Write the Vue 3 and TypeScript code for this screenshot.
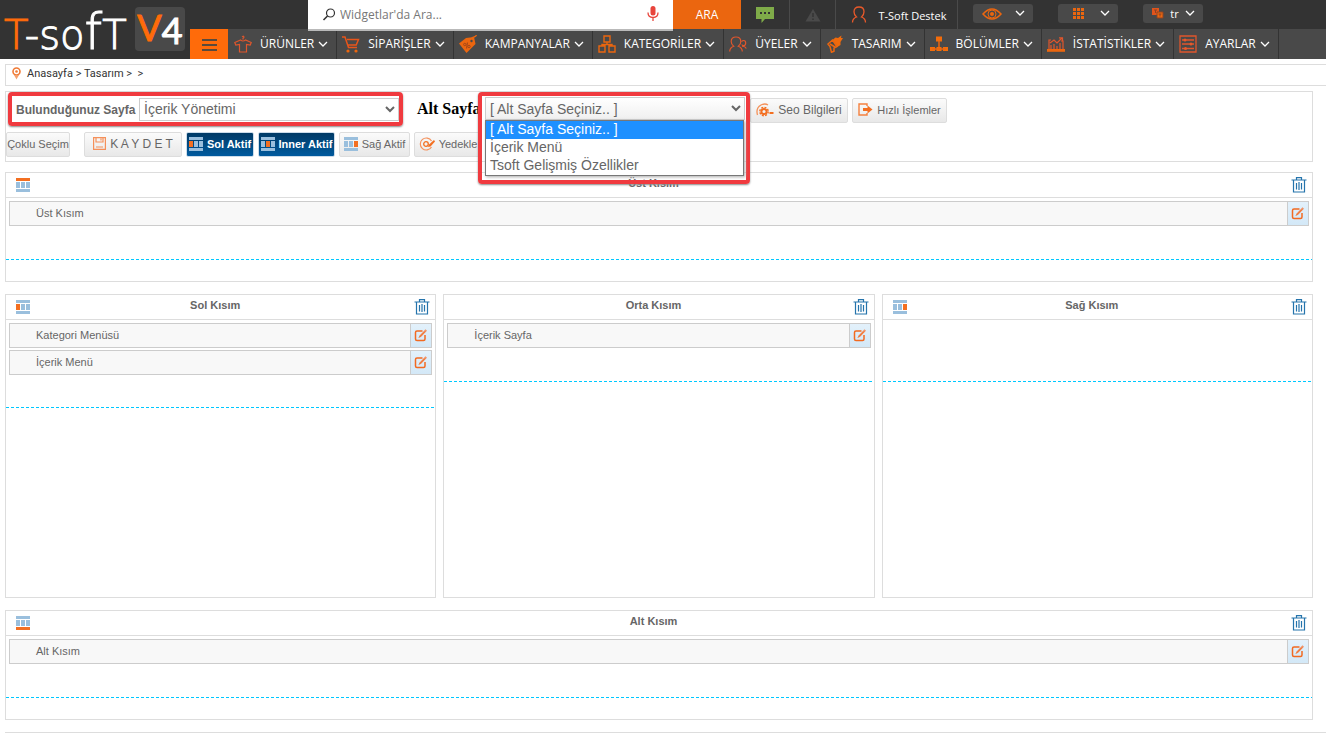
<script setup lang="ts">
import { ref } from 'vue'

type Slot = 'top' | 'left' | 'center' | 'right' | 'bottom'
interface Panel { id: Slot; title: string; items: string[]; icon: boolean }

const menu: { label: string; icon: string }[] = [
  { label: 'ÜRÜNLER', icon: 'shirt' },
  { label: 'SİPARİŞLER', icon: 'cart' },
  { label: 'KAMPANYALAR', icon: 'tag' },
  { label: 'KATEGORİLER', icon: 'boxes' },
  { label: 'ÜYELER', icon: 'users' },
  { label: 'TASARIM', icon: 'brush' },
  { label: 'BÖLÜMLER', icon: 'tree' },
  { label: 'İSTATİSTİKLER', icon: 'chart' },
  { label: 'AYARLAR', icon: 'sliders' },
]

const rows: Panel[][] = [
  [{ id: 'top', title: 'Üst Kısım', items: ['Üst Kısım'], icon: true }],
  [
    { id: 'left', title: 'Sol Kısım', items: ['Kategori Menüsü', 'İçerik Menü'], icon: true },
    { id: 'center', title: 'Orta Kısım', items: ['İçerik Sayfa'], icon: false },
    { id: 'right', title: 'Sağ Kısım', items: [], icon: true },
  ],
  [{ id: 'bottom', title: 'Alt Kısım', items: ['Alt Kısım'], icon: true }],
]

const subPages = ['[ Alt Sayfa Seçiniz.. ]', 'İçerik Menü', 'Tsoft Gelişmiş Özellikler']
const page = ref('İçerik Yönetimi')
const subPage = ref(subPages[0])
const query = ref('')
</script>

<template>
  <svg class="defs" aria-hidden="true">
    <symbol id="chev" viewBox="0 0 10 7"><path d="M1 1l4 4 4-4" fill="none" stroke="currentColor" stroke-width="1.3" /></symbol>
    <symbol id="shirt" viewBox="0 0 18 18"><path d="M9 4.500V3.200q1.300-.5.8-1.500-.8-1-1.700.1M6.500 5L.8 7.500l1 2.500 3.700-.5V17h7V9.500l3.700.5 1-2.500L11.500 5q-2.500 2-5 0z" fill="none" stroke="#e0562c" stroke-width="1.200" /></symbol>
    <symbol id="cart" viewBox="0 0 18 18"><path d="M0 2h3l3.500 10.500H15M5 4.500h11.500l-2.300 5.500H6.300" fill="none" stroke="#e8551a" stroke-width="1.500" /><circle cx="6" cy="16" r="1.600" fill="#eb660f" /><circle cx="14" cy="16" r="1.600" fill="#eb660f" /></symbol>
    <symbol id="tag" viewBox="0 0 18 18"><path d="M0 8.500L7 3l8-1 1.500 7L7.500 18z" fill="#eb660f" /><path d="M12.500 5.500q0-3 2.500-3.500 2-.5 2.500-2" fill="none" stroke="#eb660f" stroke-width="1.300" /><circle cx="12.500" cy="6" r="1.200" fill="#494949" /><path d="M8.500 7.500l-1 6" stroke="#a34719" stroke-width="1.100" /><circle cx="5.800" cy="9.500" r="1.200" fill="none" stroke="#a34719" /><circle cx="10" cy="11.500" r="1.200" fill="none" stroke="#a34719" /></symbol>
    <symbol id="boxes" viewBox="0 0 18 18"><path d="M6 1h6v6H6zM1 11h6v6H1zM11 11h6v6h-6zM9 7v2.500M4 11V9.500h10V11" fill="none" stroke="#eb660f" stroke-width="1.400" /></symbol>
    <symbol id="users" viewBox="0 0 18 18"><path d="M.7 16.500q0-3.500 4-5.200Q2.200 9.500 2.200 6.500 2.200 2 7 2t4.800 4.500q0 3-2.500 4.800 4 1.700 4 5.200M13 11.300q3.200-.3 4.300 2.200M12.700 6.500q.7-1 2-1 2 0 2 2.500t-2 2.700q-1.200 0-2-1.200" fill="none" stroke="#e0562c" stroke-width="1.200" /></symbol>
    <symbol id="brush" viewBox="0 0 18 18"><path d="M6.500 5l3-2.500L12 3l3.500-2.500L15 3h2l-2.500 4v3l-4 2.500z" fill="#f06a0c" /><path d="M6.500 5L2 9l2 2.500 1.500 5.800 2.500-1L8 13l3-1.500zM4 9l5 3" fill="none" stroke="#eb660f" stroke-width="1.500" /></symbol>
    <symbol id="tree" viewBox="0 0 18 18"><path d="M6 1.500h6v5H6zM0 12h5v4H0zM6.500 12h5v4h-5zM13 12h5v4h-5z" fill="#f36c0a" /><path d="M9 6v6M2 14h14" stroke="#eb660f" stroke-width="1.500" /></symbol>
    <symbol id="chart" viewBox="0 0 18 18"><path d="M2 14V5h2M14 6h2v8M4 14v-4M7 14V9M10 14v-3M13 14V8M3 8l4-3 3 3 5-5M12 2.800h3.500V6" fill="none" stroke="#e0562c" stroke-width="1.200" /><path d="M0 14h18v2.800H0z" fill="#eb660f" /></symbol>
    <symbol id="sliders" viewBox="0 0 18 18"><path d="M1 1h16v16H1zM3 5h12M3 9h12M3 13.500h12" fill="none" stroke="#e0562c" stroke-width="1.300" /><circle cx="6" cy="5" r="1.500" fill="#e8592a" /><circle cx="12" cy="9" r="1.500" fill="#e8592a" /><circle cx="6.500" cy="13.500" r="1.500" fill="#e8592a" /></symbol>
    <symbol id="edit" viewBox="0 0 14 14"><path d="M8.500 3H3Q1.500 3 1.500 4.500v6.500Q1.500 12.500 3 12.500h6.500q1.500 0 1.500-1.500V7" fill="none" stroke="#f26a21" stroke-width="1.500" /><path d="M4.800 9.800L5.500 7.500 11.500 1.300l1.500 1.500L7 9z" fill="#f0956a" /><path d="M5 9.500l6-6" stroke="#f26a21" /></symbol>
    <symbol id="trash" viewBox="0 0 16 16"><path d="M.5 3h15M5.500 3V.7h5V3M2.500 3v12h11V3M5.500 6v6.500M8 5v8M10.500 6v6.500" fill="none" stroke="#2574ac" stroke-width="1.200" /></symbol>
    <symbol id="slot-top" viewBox="0 0 14 14"><path d="M0 4h4v6H0zM5 4h4v6H5zM10 4h4v6h-4zM0 11h14v3H0z" fill="#9abfdd" /><path d="M0 0h14v3H0z" fill="#f36f21" /></symbol>
    <symbol id="slot-left" viewBox="0 0 14 14"><path d="M0 0h14v3H0zM5 4h4v6H5zM10 4h4v6h-4zM0 11h14v3H0z" fill="#9abfdd" /><path d="M0 4h4v6H0z" fill="#f36f21" /></symbol>
    <symbol id="slot-center" viewBox="0 0 14 14"><path d="M0 0h14v3H0zM0 4h4v6H0zM10 4h4v6h-4zM0 11h14v3H0z" fill="#9abfdd" /><path d="M5 4h4v6H5z" fill="#f36f21" /></symbol>
    <symbol id="slot-right" viewBox="0 0 14 14"><path d="M0 0h14v3H0zM0 4h4v6H0zM5 4h4v6H5zM0 11h14v3H0z" fill="#9abfdd" /><path d="M10 4h4v6h-4z" fill="#f36f21" /></symbol>
    <symbol id="slot-bottom" viewBox="0 0 14 14"><path d="M0 0h14v3H0zM0 4h4v6H0zM5 4h4v6H5zM10 4h4v6h-4z" fill="#9abfdd" /><path d="M0 11h14v3H0z" fill="#f36f21" /></symbol>
  </svg>

  <header class="header">
    <a href="#" class="logo" aria-label="T-Soft V4">
      <span class="word"><span class="accent">T</span>-so<span class="ascend">f</span>T</span>
      <span class="badge"><span class="accent">V</span><span class="four">4</span></span>
    </a>
    <div class="head-main">
      <div class="top">
        <form class="search" role="search" @submit.prevent>
          <svg class="lens" viewBox="0 0 14 14"><circle cx="8.500" cy="5" r="4" fill="none" stroke="#333" stroke-width="1.200" /><path d="M5.500 8L1.500 12" stroke="#333" stroke-width="1.600" /></svg>
          <input v-model="query" type="search" placeholder="Widgetlar'da Ara..." aria-label="Widgetlar'da Ara" />
          <button type="button" class="mic" aria-label="Sesli arama"><svg viewBox="0 0 12 16"><rect x="3.500" y="0" width="5" height="9.500" rx="2.500" fill="#e8453c" /><path d="M1 6.500q0 5 5 5t5-5M6 11.500V15" fill="none" stroke="#e8453c" stroke-width="1.300" /></svg></button>
        </form>
        <button type="button" class="go">ARA</button>
        <button class="cell chat" aria-label="Mesajlar"><svg width="18" height="16" viewBox="0 0 18 16"><path d="M0 0h18v12H9l-3.500 4V12H0z" fill="#7fab49" /><path d="M4 5h2v2H4zM8 5h2v2H8zM12 5h2v2h-2z" fill="#333" /></svg></button>
        <button class="cell warn" aria-label="Uyarılar"><svg width="16" height="14" viewBox="0 0 16 14"><path d="M8 1l7.500 12.500H.5z" fill="#4a4a4a" /><path d="M8 5v4M8 10.500v1.500" stroke="#333" stroke-width="1.400" /></svg></button>
        <button class="cell user"><svg width="16" height="17" viewBox="0 0 16 17"><path d="M1.500 16.500q0-4 4-5.500Q3 9 3 5.700 3 1 8 1t5 4.700Q13 9 10.500 11q4 1.500 4 5.500" fill="none" stroke="#e8592a" stroke-width="1.300" /></svg><span>T-Soft Destek</span></button>
        <div class="pills">
          <button class="pill" aria-label="Görünüm"><svg width="20" height="12" viewBox="0 0 20 12"><path d="M1 6q9-10 18 0-9 10-18 0z" fill="none" stroke="#eb660f" stroke-width="1.600" /><circle cx="10" cy="6" r="4" fill="none" stroke="#eb660f" /><circle cx="10" cy="6" r="2" fill="#eb660f" /></svg><svg class="chev"><use href="#chev" /></svg></button>
          <button class="pill" aria-label="Izgara"><svg width="20" height="11" viewBox="0 0 20 11"><path d="M6 0h3v3H6zM10 0h3v3h-3zM14 0h3v3h-3zM6 4h3v3H6zM10 4h3v3h-3zM14 4h3v3h-3zM6 8h3v3H6zM10 8h3v3h-3zM14 8h3v3h-3z" fill="#eb660f" /></svg><svg class="chev"><use href="#chev" /></svg></button>
          <button class="pill lang"><svg width="12" height="11" viewBox="0 0 12 11"><path d="M0 0h7v7H0z" fill="#e0541c" /><path d="M5 4h6v6H5z" fill="#eb660f" stroke="#8e4423" /><path d="M2 2h3M3.500 2v3M6.500 6h3M8 6v2.500" stroke="#8e4423" /></svg>tr<svg class="chev"><use href="#chev" /></svg></button>
        </div>
      </div>
      <nav class="nav">
        <button class="burger" aria-label="Menü"><i></i><i></i><i></i></button>
        <a v-for="m in menu" :key="m.icon" href="#" class="nav-item">
          <svg class="ico"><use :href="'#' + m.icon" /></svg><span>{{ m.label }}</span><svg class="chev"><use href="#chev" /></svg>
        </a>
      </nav>
    </div>
  </header>

  <nav class="crumbs">
    <svg width="9" height="13" viewBox="0 0 9 13"><circle cx="4.500" cy="4.500" r="3.500" fill="none" stroke="#f07a35" stroke-width="1.600" /><circle cx="4.500" cy="4.500" r="1.300" fill="#f07a35" /><path d="M2 8l2.500 4.500L7 8" fill="#f5a06d" /></svg>
    <span><a href="#">Anasayfa</a> &gt; <a href="#">Tasarım</a> &gt;&nbsp; &gt;</span>
  </nav>

  <main class="content">
    <section class="tools">
      <div class="row first">
        <div class="frame">
          <label for="page">Bulunduğunuz Sayfa</label>
          <select id="page" v-model="page"><option>İçerik Yönetimi</option></select>
        </div>
        <label for="sub" class="sub-label">Alt Sayfa</label>
        <div class="sub">
          <select id="sub" v-model="subPage"><option v-for="s in subPages" :key="s">{{ s }}</option></select>
          <div class="overlay">
            <ul role="listbox" aria-label="Alt Sayfa">
              <li v-for="s in subPages" :key="s" role="option" :aria-selected="s === subPage" :class="{ on: s === subPage }" @click="subPage = s">{{ s }}</li>
            </ul>
          </div>
        </div>
        <button class="btn big seo"><svg width="18" height="14" viewBox="0 0 18 14"><path d="M1.500 12Q-.5 5 5 2q4-2 7 0" fill="none" stroke="#f5925a" stroke-width="1.300" /><circle cx="8" cy="8.500" r="2.600" fill="none" stroke="#f36f21" stroke-width="2" /><circle cx="8" cy="8.500" r="4.200" fill="none" stroke="#f36f21" stroke-width="1.400" stroke-dasharray="2 1.300" /><path d="M13.500 10h4" stroke="#f36f21" stroke-width="2" /></svg>Seo Bilgileri</button>
        <button class="btn quick"><svg width="15" height="13" viewBox="0 0 15 13"><path d="M9 3V1H1v11h8v-2" fill="none" stroke="#f5813f" stroke-width="1.400" /><path d="M5 5h4.500V2.500l5 4-5 4V8H5z" fill="#f36f21" /></svg>Hızlı İşlemler</button>
      </div>
      <div class="row second">
        <button class="btn multi">Çoklu Seçim</button>
        <button class="btn big save"><svg width="13" height="13" viewBox="0 0 13 13"><path d="M.6.600H12.400V12.400H.6zM3 .6v4.400h7V.6M8 1.500v2M3 10h7" fill="none" stroke="#f5905a" stroke-width="1.200" /></svg>K A Y D E T</button>
        <button class="btn active left"><svg width="14" height="14"><use href="#slot-left" /></svg>Sol Aktif</button>
        <button class="btn active inner"><svg width="14" height="14"><use href="#slot-center" /></svg>Inner Aktif</button>
        <button class="btn right"><svg width="14" height="14"><use href="#slot-right" /></svg>Sağ Aktif</button>
        <button class="btn backup"><svg width="16" height="14" viewBox="0 0 16 14"><path d="M12.500 4A6 6 0 1 0 12.500 10" fill="none" stroke="#f5905a" stroke-width="1.200" /><circle cx="7" cy="7" r="2.300" fill="none" stroke="#f36f21" stroke-width="1.300" /><path d="M9 10l1-2.500 5-4.500 1 1.500-4.500 5z" fill="#f36f21" /></svg>Yedekle</button>
      </div>
    </section>

    <div v-for="(row, r) in rows" :key="r" class="panels" :class="{ columns: row.length > 1 }">
      <section v-for="p in row" :key="p.id" class="panel">
        <header class="panel-head">
          <svg v-if="p.icon" class="slot"><use :href="'#slot-' + p.id" /></svg>
          <span v-else></span>
          <h2>{{ p.title }}</h2>
          <button class="trash" aria-label="Temizle"><svg><use href="#trash" /></svg></button>
        </header>
        <div class="drop">
          <div v-for="i in p.items" :key="i" class="item">
            <span>{{ i }}</span>
            <button class="edit" aria-label="Düzenle"><svg><use href="#edit" /></svg></button>
          </div>
        </div>
      </section>
    </div>
  </main>
  <footer class="foot"></footer>
</template>

<style>
body { background: #fff; overflow: hidden; }
</style>

<style scoped>
* { box-sizing: border-box; }
button { font: inherit; border: 0; padding: 0; background: none; color: inherit; }
svg { flex: none; display: block; }
a { color: inherit; text-decoration: none; }
.defs { position: absolute; width: 0; height: 0; }

.header { display: flex; height: 59px; background: #333; color: #fff; font: 12px "Open Sans", "Noto Sans", sans-serif; }
.logo { width: 190px; display: flex; align-items: flex-start; padding: 7px 5px 0 4px; flex: none; }
.word { width: 131px; font-family: "DejaVu Sans", sans-serif; font-size: 40px; font-weight: 200; line-height: 56px; white-space: nowrap; -webkit-text-stroke: 1px currentColor; }
.ascend { font-size: 50px; line-height: 44px; }
.accent { color: #ff6b0a; }
.badge { width: 50px; height: 44px; border-radius: 4px; background: #494949; display: flex; justify-content: center; font-family: Lato, sans-serif; font-size: 36px; line-height: 40px; -webkit-text-stroke: 1px currentColor; }
.four { line-height: 46px; }
.head-main { flex: 1; min-width: 0; }
.top { height: 29px; display: flex; padding-left: 118px; }
.search { width: 365px; height: 31px; display: flex; background: #fff; border-bottom: 2px solid #b9b9b9; align-items: center; position: relative; z-index: 1; }
.lens { width: 14px; height: 14px; margin-left: 14px; }
.search input { flex: 1; min-width: 0; border: 0; outline: 0; padding: 0 4px; background: none; font: inherit; color: #555; }
.search input::placeholder { color: #777; }
.mic { margin: 0 14px 2px 0; }
.mic svg { width: 12px; height: 16px; }
.go { width: 68px; height: 29px; background: #eb660f; color: #fff; }
.cell { border-right: 1px solid #4a4a4a; display: flex; align-items: center; justify-content: center; }
.chat { width: 49px; }
.warn { width: 46px; }
.user { width: 122px; gap: 11px; padding-left: 5px; font-size: 11px; }
.user span { padding-top: 2px; }
.pills { display: flex; gap: 25px; padding: 4px 0 0 15px; }
.pill { width: 60px; height: 19px; border-radius: 3px; background: #494949; display: flex; align-items: center; justify-content: space-between; padding: 0 8px 0 9px; font-size: 11px; }
.chev { width: 10px; height: 7px; }
.nav { height: 30px; display: flex; background: #494949; }
.burger { width: 38px; background: #ff6b0a; display: flex; flex-direction: column; gap: 3px; align-items: center; justify-content: center; padding-top: 2px; margin-right: 1px; }
.burger i { width: 15px; height: 2px; background: #5a4a3c; }
.nav-item { display: flex; align-items: center; border-right: 1px solid #333; padding: 0 8px 0 5px; white-space: nowrap; }
.nav-item span { padding-bottom: 2px; }
.ico { width: 18px; height: 18px; margin-right: 8px; }
.nav-item .chev { margin-left: 4px; }

.crumbs { margin: 5px 0 0 5px; height: 22px; border: 1px solid #ddd; border-right: 0; display: flex; align-items: center; gap: 6px; padding: 0 0 3px 6px; font: 11px Roboto, sans-serif; color: #333; }

.content { padding: 5px 13px 0 5px; font: 11px "Liberation Sans", Arial, sans-serif; color: #666; }
.tools { border: 1px solid #ddd; height: 71px; }
.row { display: flex; align-items: center; }
.first { height: 36px; align-items: flex-start; }
.frame { width: 395px; height: 34px; margin-left: 2px; border: 4px solid #f03a3f; border-radius: 4px; display: flex; align-items: center; justify-content: space-between; padding-left: 4px; box-shadow: 0 1px 2px #888; flex: none; }
.frame label { font-size: 12px; font-weight: 700; white-space: nowrap; padding-top: 2px; }
select { height: 23px; width: 260px; border: 1px solid #ccc; border-radius: 0; background: #fff; color: #666; font: 14px "Liberation Sans", Arial, sans-serif; padding: 0 2px 0 0; outline: 0; }
.sub-label { font: 700 16px "Liberation Serif", "Times New Roman", serif; color: #000; width: 67px; margin: 8px 0 0 14px; white-space: nowrap; flex: none; }
.sub { position: relative; flex: none; padding: 5px 0 0 1px; }
.sub select { display: block; background: linear-gradient(#fff, #f0f0f0); }
.overlay { position: absolute; z-index: 2; top: 0; left: -6px; width: 272px; height: 92px; border: 4px solid #f03a3f; border-radius: 4px; box-shadow: 0 1px 2px #888; padding: 24px 2px 0 3px; pointer-events: none; }
.overlay ul { margin: 0; padding: 0; list-style: none; border: 1px solid #777; background: #fff; font-size: 14px; line-height: 16px; pointer-events: auto; box-shadow: 1px 1px 3px #aaa; }
.overlay li { padding: 0 4px 2px; }
.overlay li.on { background: #1e90ff; color: #fff; }
.btn { height: 25px; border: 1px solid #ddd; border-radius: 2px; background: linear-gradient(#fbfbfb, #e8e8e8); display: flex; align-items: center; justify-content: center; gap: 4px; padding-bottom: 2px; white-space: nowrap; color: #666; flex: none; }
.first .btn { margin-top: 6px; }
.btn.big { font-size: 12px; }
.seo { width: 98px; margin-left: 5px; }
.quick { width: 95px; margin-left: 4px; }
.second { margin-top: 4px; gap: 4px; }
.multi { width: 64px; margin-right: 10px; }
.save { width: 98px; }
.left { width: 68px; }
.inner { width: 77px; }
.right { width: 71px; }
.backup { width: 68px; }
.btn.active { background: linear-gradient(#003a66, #005a9e); border-color: #ccdcea; color: #fff; font-weight: 700; }

.panels { display: flex; gap: 7px; margin-top: 12px; }
.panels:nth-of-type(1) { margin-top: 10px; }
.panel { flex: 1; min-height: 110px; border: 1px solid #ddd; }
.columns .panel { min-height: 304px; }
.panel-head { height: 25px; display: grid; grid-template-columns: 14px 1fr 30px; align-items: center; border-bottom: 1px solid #ddd; padding: 0 5px 0 10px; }
.panel-head h2 { margin: 0; padding-bottom: 4px; font-size: 11px; font-weight: 700; text-align: center; }
.slot { width: 14px; height: 14px; }
.trash { justify-self: end; }
.trash svg { width: 16px; height: 16px; }
.drop { min-height: 62px; padding: 3px 3px 33px; display: flex; flex-direction: column; gap: 2px; background: repeating-linear-gradient(90deg, #00c8ff 0 3px, transparent 3px 5px) bottom / 100% 1px no-repeat; }
.item { height: 25px; border: 1px solid #ccc; background: #f8f8f8; display: flex; justify-content: space-between; align-items: center; padding-left: 26px; }
.item span { padding-bottom: 2px; }
.edit { width: 21px; height: 23px; border-left: 1px solid #ccc; background: linear-gradient(#e3f1fb, #d3e8f7); display: flex; align-items: center; justify-content: center; padding-bottom: 1px; }
.edit svg { width: 14px; height: 14px; }
.foot { margin: 12px 0 0 5px; border-top: 1px solid #ddd; }
</style>
